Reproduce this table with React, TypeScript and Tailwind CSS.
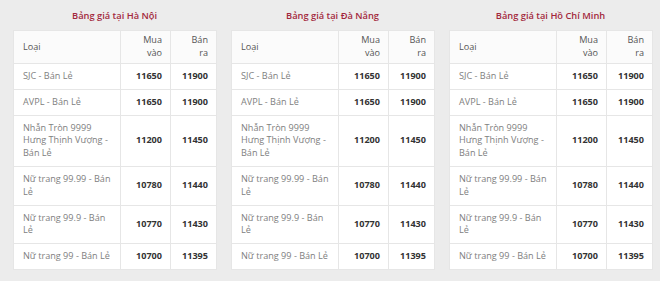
import React from 'react';

type Row = { name: string; buy: string; sell: string };

const rows: Row[] = [
  { name: 'SJC - Bán Lẻ', buy: '11650', sell: '11900' },
  { name: 'AVPL - Bán Lẻ', buy: '11650', sell: '11900' },
  { name: 'Nhẫn Tròn 9999 Hưng Thịnh Vượng - Bán Lẻ', buy: '11200', sell: '11450' },
  { name: 'Nữ trang 99.99 - Bán Lẻ', buy: '10780', sell: '11440' },
  { name: 'Nữ trang 99.9 - Bán Lẻ', buy: '10770', sell: '11430' },
  { name: 'Nữ trang 99 - Bán Lẻ', buy: '10700', sell: '11395' },
];

const cities = ['Hà Nội', 'Đà Nẵng', 'Hồ Chí Minh'];

const PriceTable: React.FC<{ city: string }> = ({ city }) => (
  <div className="flex flex-col w-[203px]">
    <h3 className="h-[30px] flex items-center justify-center pt-[2px] text-[9.3px] font-semibold text-[#a3283c]">
      Bảng giá tại {city}
    </h3>
    <table className="w-[203px] table-fixed border-collapse bg-white text-[9.1px] leading-[12.8px]">
      <colgroup>
        <col className="w-[107px]" />
        <col className="w-[50px]" />
        <col className="w-[46px]" />
      </colgroup>
      <thead>
        <tr className="h-[33px] bg-[#fbfbfb] text-[#555]">
          <th className="border border-[#e6e6e6] px-[9px] text-left font-normal">Loại</th>
          <th className="border border-[#e6e6e6] px-[8px] text-right font-normal">
            Mua
            <br />
            vào
          </th>
          <th className="border border-[#e6e6e6] px-[8px] text-right font-normal">
            Bán
            <br />
            ra
          </th>
        </tr>
      </thead>
      <tbody>
        {rows.map((r) => (
          <tr key={r.name}>
            <td className="border border-[#e6e6e6] px-[9px] py-[6px] align-middle text-[#808080]">{r.name}</td>
            <td className="border border-[#e6e6e6] px-[8px] text-right align-middle font-bold text-[#333]">{r.buy}</td>
            <td className="border border-[#e6e6e6] px-[8px] text-right align-middle font-bold text-[#333]">{r.sell}</td>
          </tr>
        ))}
      </tbody>
    </table>
  </div>
);

export default function App() {
  return (
    <div className="w-[660px] h-[281px] overflow-hidden bg-[#ececec] pl-[13px] flex gap-[15px] font-['Open_Sans',sans-serif]">
      {cities.map((c) => (
        <PriceTable key={c} city={c} />
      ))}
    </div>
  );
}
